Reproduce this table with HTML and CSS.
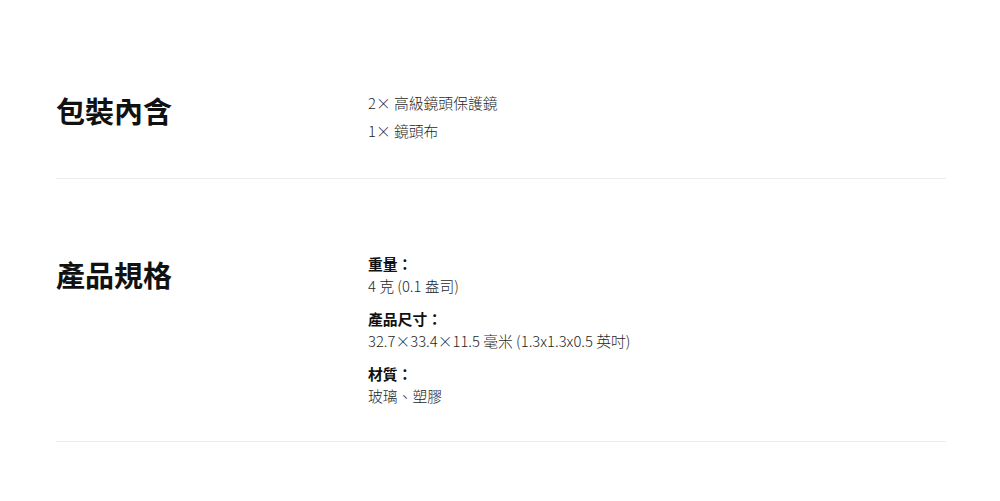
FILE: index.html
```html
<!DOCTYPE html>
<html lang="zh-Hant">
<head>
<meta charset="utf-8">
<link rel="stylesheet" href="styles.css">
</head>
<body>
<div class="page">
  <section class="sec sec-box">
    <h2 class="title">包裝內含</h2>
    <ul class="list">
      <li>2× 高級鏡頭保護鏡</li>
      <li>1× 鏡頭布</li>
    </ul>
  </section>
  <section class="sec sec-spec">
    <h2 class="title">產品規格</h2>
    <div class="specs">
      <div class="spec">
        <div class="label">重量：</div>
        <div class="value">4 克 (0.1 盎司)</div>
      </div>
      <div class="spec">
        <div class="label">產品尺寸：</div>
        <div class="value">32.7×33.4×11.5 毫米 (1.3x1.3x0.5 英吋)</div>
      </div>
      <div class="spec">
        <div class="label">材質：</div>
        <div class="value">玻璃、塑膠</div>
      </div>
    </div>
  </section>
</div>
</body>
</html>
```

FILE: styles.css
```css
* { box-sizing: border-box; }
html, body { margin: 0; padding: 0; background: #fff; }
body {
  font-family: "Noto Sans CJK TC", "Noto Sans", sans-serif;
  color: #222;
}
.page {
  margin: 0 54px 0 56px;
}
.sec {
  display: flex;
  align-items: flex-start;
  border-bottom: 1px solid #ececec;
}
.sec-box { padding: 89px 0 33px; }
.sec-spec { padding: 74px 0 34px; }
.title {
  flex: 0 0 312px;
  margin: 0;
  font-size: 29px;
  line-height: 48px;
  font-weight: 700;
  color: #111;
  margin-top: -3px;
}
.list {
  list-style: none;
  margin: 0;
  padding: 0;
  font-size: 14.8px;
  line-height: 28px;
  font-weight: 300;
  color: #1f1f1f;
}
.specs {
  display: flex;
  flex-direction: column;
  gap: 11px;
  font-size: 14.8px;
  line-height: 22px;
}
.label { font-weight: 700; color: #111; }
.value { color: #1f1f1f; font-weight: 300; }
```
